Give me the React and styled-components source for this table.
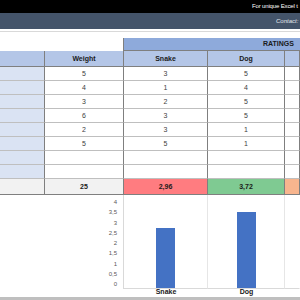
import React from 'react';
import styled, { createGlobalStyle } from 'styled-components';

const GlobalStyle = createGlobalStyle`
  html, body {
    margin: 0;
    padding: 0;
    background: #ffffff;
  }
  body {
    width: 300px;
    height: 300px;
    overflow: hidden;
    font-family: "Liberation Sans", Arial, sans-serif;
  }
  * {
    box-sizing: border-box;
  }
`;

const COLS = '45px 79px 84px 77px 1fr';

const Page = styled.div`
  width: 300px;
  height: 300px;
  overflow: hidden;
`;

const TopBar = styled.div`
  height: 13px;
  background: #000000;
  color: #ffffff;
  font-size: 6px;
  letter-spacing: -0.15px;
  line-height: 13px;
  padding-left: 252px;
  white-space: nowrap;
  overflow: hidden;
`;

const ContactBar = styled.div`
  height: 16px;
  background: #44546a;
  color: #e4e8ee;
  font-size: 6px;
  font-style: italic;
  line-height: 16px;
  padding-left: 276px;
  white-space: nowrap;
  overflow: hidden;
`;

const Rule = styled.div`
  height: 1px;
  background: #d9d9d9;
  margin: 2px 0 6px;
`;

const Grid = styled.div`
  display: grid;
  grid-template-columns: ${COLS};
`;

const Blank = styled.div`
  grid-column: span 2;
  border-right: 1px solid #7f7f7f;
`;

const Ratings = styled.div`
  grid-column: span 3;
  height: 13px;
  background: #8eaadb;
  border-bottom: 1px solid #7f7f7f;
  color: #1a1a1a;
  font-size: 7px;
  font-weight: bold;
  line-height: 12px;
  padding-left: 139px;
  white-space: nowrap;
  overflow: hidden;
`;

const Cell = styled.div`
  height: ${p => p.$h || 14}px;
  border-right: 1px solid #7f7f7f;
  border-bottom: 1px solid ${p => p.$line || '#bfbfbf'};
  background: ${p => p.$bg || '#ffffff'};
  color: ${p => (p.$bold ? '#1a1a1a' : '#404040')};
  font-size: 7px;
  font-weight: ${p => (p.$bold ? 'bold' : 'normal')};
  display: flex;
  align-items: center;
  justify-content: center;
  white-space: nowrap;
  overflow: hidden;
`;

const PlotRow = styled.div`
  display: grid;
  grid-template-columns: ${COLS};
  height: 91px;
`;

const AxisLabels = styled.div`
  grid-column: span 2;
  padding: 2px 6px 0 0;
  border-right: 1px solid #d9d9d9;
  text-align: right;
`;

const Tick = styled.div`
  height: 10.25px;
  line-height: 10.25px;
  font-size: 6px;
  color: #595959;
`;

const PlotCell = styled.div`
  border-right: 1px solid ${p => (p.$last ? 'transparent' : '#e6e6e6')};
  border-bottom: 1px solid #d9d9d9;
  display: flex;
  align-items: flex-end;
  justify-content: center;
`;

const Bar = styled.div`
  width: 19px;
  background: #4472c4;
`;

const CategoryRow = styled.div`
  display: grid;
  grid-template-columns: ${COLS};
  height: 11px;
`;

const Category = styled.div`
  grid-column: ${p => p.$col};
  font-size: 7px;
  font-weight: bold;
  color: #1a1a1a;
  text-align: center;
  line-height: 11px;
`;

const Strip = styled.div`
  height: 4px;
  background: #bfbfbf;
`;

const weights = [5, 4, 3, 6, 2, 5, '', ''];
const snake = [3, 1, 2, 3, 3, 5, '', ''];
const dog = [5, 4, 5, 5, 1, 1, '', ''];
const ticks = ['4', '3,5', '3', '2,5', '2', '1,5', '1', '0,5', '0'];
const bars = [
  { name: 'Snake', value: 2.96 },
  { name: 'Dog', value: 3.72 },
];

export default function App() {
  return (
    <Page>
      <GlobalStyle />
      <TopBar>For unique Excel t</TopBar>
      <ContactBar>Contact:</ContactBar>
      <Rule />
      <Grid>
        <Blank />
        <Ratings>RATINGS</Ratings>

        <Cell $h={16} $bg="#b4c6e7" $line="#7f7f7f" $bold />
        <Cell $h={16} $bg="#b4c6e7" $line="#7f7f7f" $bold>Weight</Cell>
        <Cell $h={16} $bg="#b4c6e7" $line="#7f7f7f" $bold>Snake</Cell>
        <Cell $h={16} $bg="#b4c6e7" $line="#7f7f7f" $bold>Dog</Cell>
        <Cell $h={16} $bg="#b4c6e7" $line="#7f7f7f" $bold />

        {weights.map((w, i) => (
          <React.Fragment key={i}>
            <Cell $bg="#dae3f3" />
            <Cell>{w}</Cell>
            <Cell>{snake[i]}</Cell>
            <Cell>{dog[i]}</Cell>
            <Cell />
          </React.Fragment>
        ))}

        <Cell $h={16} $bg="#f2f2f2" $line="#7f7f7f" />
        <Cell $h={16} $bg="#f2f2f2" $line="#7f7f7f" $bold>25</Cell>
        <Cell $h={16} $bg="#ff7c80" $line="#7f7f7f" $bold>2,96</Cell>
        <Cell $h={16} $bg="#7fca92" $line="#7f7f7f" $bold>3,72</Cell>
        <Cell $h={16} $bg="#f8b58e" $line="#7f7f7f" />
      </Grid>
      <PlotRow>
        <AxisLabels>
          {ticks.map(t => (
            <Tick key={t}>{t}</Tick>
          ))}
        </AxisLabels>
        {bars.map(b => (
          <PlotCell key={b.name}>
            <Bar style={{ height: `${b.value * 20.5}px` }} />
          </PlotCell>
        ))}
        <PlotCell $last />
      </PlotRow>
      <CategoryRow>
        {bars.map((b, i) => (
          <Category key={b.name} $col={i + 3}>{b.name}</Category>
        ))}
      </CategoryRow>
      <Strip />
    </Page>
  );
}
